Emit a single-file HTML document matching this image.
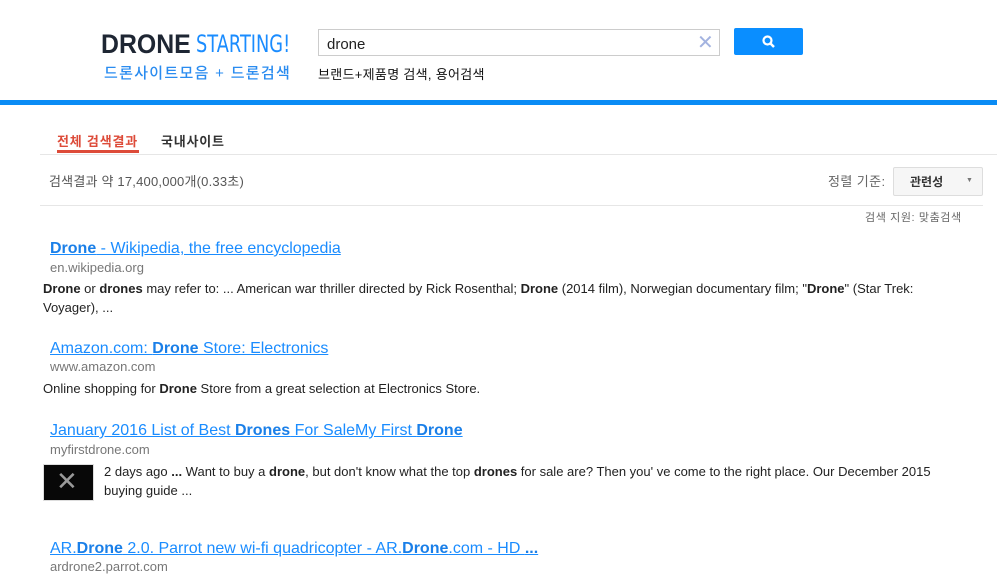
<!DOCTYPE html>
<html><head><meta charset="utf-8"><style>
body{margin:0;width:997px;height:581px;overflow:hidden;background:#fff;font-family:Arial,"Liberation Sans","Noto Sans CJK KR",sans-serif;position:relative}
.a{position:absolute;white-space:nowrap}
.t{font-size:16px;color:#1a8cff;text-decoration:underline}
.t b{color:#1a7fe8}
.u{font-size:13px;color:#777}
.s{font-size:13px;color:#222;line-height:19px}
</style></head><body>
<div class="a" style="left:101px;top:29px;font-size:27px;font-weight:600;color:#1e2633;font-family:'Liberation Sans',sans-serif;transform:scaleX(0.92);transform-origin:left">DRONE</div>
<div class="a" style="left:196px;top:30px;font-size:24px;color:#1a8cff;font-family:'DejaVu Sans',sans-serif;transform:scaleX(0.74);transform-origin:left">STARTING!</div>
<div class="a" style="left:104px;top:62px;font-size:15px;font-weight:500;color:#2a8cf0;letter-spacing:1.3px">드론사이트모음 + 드론검색</div>
<div class="a" style="left:318px;top:29px;width:400px;height:25px;border:1px solid #ccc;"></div>
<div class="a" style="left:327px;top:36px;font-size:15px;color:#222">drone</div>
<div class="a" style="left:697px;top:30px;font-size:20px;color:#a3b3e0">✕</div>
<div class="a" style="left:734px;top:28px;width:69px;height:27px;background:#0a8eff;border-radius:2px"></div>
<svg class="a" style="left:761px;top:34px" width="16" height="16" viewBox="0 0 16 16"><circle cx="6.5" cy="6.5" r="4" fill="none" stroke="#fff" stroke-width="2.2"/><line x1="9.5" y1="9.5" x2="13" y2="13" stroke="#fff" stroke-width="2.5"/></svg>
<div class="a" style="left:318px;top:64px;font-size:13px;color:#111;letter-spacing:0.3px">브랜드+제품명 검색, 용어검색</div>
<div class="a" style="left:0;top:100px;width:997px;height:5px;background:#0a8cf5"></div>
<div class="a" style="left:57px;top:131px;font-size:13px;font-weight:bold;color:#dd4b39;letter-spacing:0.8px">전체 검색결과</div>
<div class="a" style="left:57px;top:150px;width:82px;height:3px;background:#dd4b39"></div>
<div class="a" style="left:161px;top:131px;font-size:13px;font-weight:bold;color:#333;letter-spacing:0.8px">국내사이트</div>
<div class="a" style="left:40px;top:154px;width:957px;height:1px;background:#e6e6e6"></div>
<div class="a" style="left:49px;top:171px;font-size:13px;color:#555;letter-spacing:0.2px">검색결과 약 17,400,000개(0.33초)</div>
<div class="a" style="left:828px;top:171px;font-size:13px;color:#666;letter-spacing:0.4px">정렬 기준:</div>
<div class="a" style="left:893px;top:167px;width:88px;height:27px;border:1px solid #ddd;background:#f6f6f6;border-radius:2px"></div>
<div class="a" style="left:910px;top:173px;font-size:12px;font-weight:bold;color:#333">관련성</div>
<div class="a" style="left:966px;top:176px;font-size:7px;color:#777;line-height:10px">▼</div>
<div class="a" style="left:40px;top:205px;width:943px;height:1px;background:#e6e6e6"></div>
<div class="a" style="left:865px;top:209px;font-size:11px;color:#666;letter-spacing:0.6px">검색 지원: 맞춤검색</div>

<div class="a t" style="left:50px;top:240px"><b>Drone</b> - Wikipedia, the free encyclopedia</div>
<div class="a u" style="left:50px;top:260px">en.wikipedia.org</div>
<div class="a s" style="left:43px;top:279px"><b>Drone</b> or <b>drones</b> may refer to: ... American war thriller directed by Rick Rosenthal; <b>Drone</b> (2014 film), Norwegian documentary film; "<b>Drone</b>" (Star Trek:<br>Voyager), ...</div>

<div class="a t" style="left:50px;top:340px">Amazon.com: <b>Drone</b> Store: Electronics</div>
<div class="a u" style="left:50px;top:359px">www.amazon.com</div>
<div class="a s" style="left:43px;top:379px">Online shopping for <b>Drone</b> Store from a great selection at Electronics Store.</div>

<div class="a t" style="left:50px;top:422px">January 2016 List of Best <b>Drones</b> For SaleMy First <b>Drone</b></div>
<div class="a u" style="left:50px;top:442px">myfirstdrone.com</div>
<div class="a" style="left:43px;top:464px;width:51px;height:37px;background:#080808;border:1px solid #ddd;box-sizing:border-box"></div>
<div class="a" style="left:56px;top:468px;font-size:26px;color:#999;font-family:'DejaVu Sans';line-height:28px">✕</div>
<div class="a s" style="left:104px;top:462px">2 days ago <b>...</b> Want to buy a <b>drone</b>, but don't know what the top <b>drones</b> for sale are? Then you' ve come to the right place. Our December 2015<br>buying guide ...</div>

<div class="a t" style="left:50px;top:540px">AR.<b>Drone</b> 2.0. Parrot new wi-fi quadricopter - AR.<b>Drone</b>.com - HD <b>...</b></div>
<div class="a u" style="left:50px;top:559px">ardrone2.parrot.com</div>
</body></html>
